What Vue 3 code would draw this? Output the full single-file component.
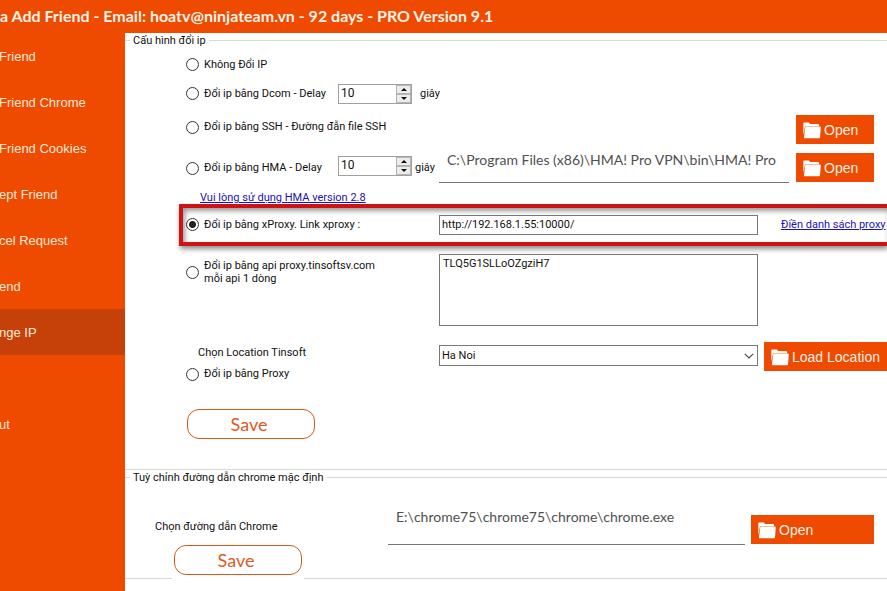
<script setup>
import { ref, h } from 'vue'

const menu = ['Friend', 'Friend Chrome', 'Friend Cookies', 'ept Friend', 'cel Request', 'end', 'nge IP', '', 'ut']
const active = ref(6)
const mode = ref('xproxy')
const dcomDelay = ref(10)
const hmaDelay = ref(10)
const hmaPath = ref('C:\\Program Files (x86)\\HMA! Pro VPN\\bin\\HMA! Pro')
const proxyLink = ref('http://192.168.1.55:10000/')
const apiKeys = ref('TLQ5G1SLLoOZgziH7')
const city = ref('Ha Noi')
const chromePath = ref('E:\\chrome75\\chrome75\\chrome\\chrome.exe')

const FolderIcon = () =>
  h('svg', { viewBox: '0 0 18 17', width: 18, height: 17, 'aria-hidden': 'true' }, [
    h('path', { d: 'M0.3 13V1.4Q0.3 0.6 1.1 0.6H5.6Q6.3 0.6 6.6 1.3L6.9 2H15Q16 2 16 3V4.2H3Q2.1 4.2 1.9 5.1Z', fill: '#fff' }),
    h('path', { d: 'M3.2 4.6H17Q17.9 4.6 17.8 5.5L17 15.4Q16.9 16.2 16.1 16.2H1.6Q0.8 16.2 0.9 15.4L2.2 5.4Q2.4 4.6 3.2 4.6Z', fill: '#fff' }),
  ])
</script>

<template>
  <div class="app">
    <header class="titlebar">a Add Friend - Email: hoatv@ninjateam.vn - 92 days - PRO Version 9.1</header>
    <div class="body">
      <nav class="sidebar">
        <template v-for="(item, i) in menu" :key="i">
          <a v-if="item" href="#" class="item" :class="{ active: active === i }" @click.prevent="active = i">{{ item }}</a>
          <span v-else class="item"></span>
        </template>
      </nav>

      <main class="main">
        <fieldset class="group">
          <legend>Cấu hình đổi ip</legend>
          <div class="ip">
            <div class="row short">
              <label class="radio"><input v-model="mode" type="radio" name="mode" value="none" />Không Đổi IP</label>
            </div>

            <div class="row short">
              <label class="radio delayed"><input v-model="mode" type="radio" name="mode" value="dcom" />Đổi ip bằng Dcom - Delay</label>
              <span class="spinner">
                <input v-model="dcomDelay" type="number" aria-label="Dcom delay" />
                <span class="steps">
                  <button type="button" aria-label="+" @click="dcomDelay++"><i class="up"></i></button>
                  <button type="button" aria-label="-" @click="dcomDelay--"><i class="down"></i></button>
                </span>
              </span>
              <span class="unit wide">giây</span>
            </div>

            <div class="row tool ssh">
              <label class="radio grow"><input v-model="mode" type="radio" name="mode" value="ssh" />Đổi ip bằng SSH - Đường đẫn file SSH</label>
              <button type="button" class="solid"><FolderIcon />Open</button>
            </div>

            <div class="row tool hma">
              <div class="lead">
                <label class="radio delayed"><input v-model="mode" type="radio" name="mode" value="hma" />Đổi ip bằng HMA - Delay</label>
                <span class="spinner">
                  <input v-model="hmaDelay" type="number" aria-label="HMA delay" />
                  <span class="steps">
                    <button type="button" aria-label="+" @click="hmaDelay++"><i class="up"></i></button>
                    <button type="button" aria-label="-" @click="hmaDelay--"><i class="down"></i></button>
                  </span>
                </span>
                <span class="unit">giây</span>
              </div>
              <input v-model="hmaPath" class="path" type="text" aria-label="HMA" />
              <button type="button" class="solid"><FolderIcon />Open</button>
            </div>

            <div class="note"><a href="#">Vui lòng sử dụng HMA version 2.8</a></div>

            <div class="row highlight">
              <label class="radio lead"><input v-model="mode" type="radio" name="mode" value="xproxy" />Đổi ip bằng xProxy. Link xproxy :</label>
              <input v-model="proxyLink" class="box" type="text" aria-label="Link xproxy" />
              <div class="aside"><a href="#">Điền danh sách proxy</a></div>
            </div>

            <div class="row api">
              <label class="radio lead"><input v-model="mode" type="radio" name="mode" value="tinsoft" /><span>Đổi ip bằng api proxy.tinsoftsv.com<br />mỗi api 1 dòng</span></label>
              <textarea v-model="apiKeys" class="box" aria-label="API"></textarea>
              <div class="aside"></div>
            </div>

            <div class="row location">
              <div class="lead stack">
                <label class="caption" for="city">Chọn Location Tinsoft</label>
                <label class="radio"><input v-model="mode" type="radio" name="mode" value="proxy" />Đổi ip bằng Proxy</label>
              </div>
              <div class="select">
                <select id="city" v-model="city"><option>Ha Noi</option></select>
                <svg viewBox="0 0 10 6" width="10" height="6" aria-hidden="true"><path d="M0.8 0.8L5 5L9.2 0.8" fill="none" stroke="#444" stroke-width="1.1" /></svg>
              </div>
              <div class="aside near"><button type="button" class="solid load"><FolderIcon />Load Location</button></div>
            </div>

            <button type="button" class="save">Save</button>
          </div>
        </fieldset>

        <fieldset class="group">
          <legend>Tuỳ chỉnh đường dẫn chrome mặc định</legend>
          <div class="row chrome-row">
            <label class="lead" for="chrome">Chọn đường dẫn Chrome</label>
            <input id="chrome" v-model="chromePath" class="path" type="text" />
            <button type="button" class="solid long"><FolderIcon />Open</button>
          </div>
          <div class="save-wrap"><button type="button" class="save">Save</button></div>
        </fieldset>
      </main>
    </div>
  </div>
</template>

<style>
body {
  background: #fff;
}
</style>

<style scoped>
.app {
  display: flex;
  flex-direction: column;
  min-height: 100vh;
  overflow: hidden;
  color: #111;
  font: 11px/14px Roboto, "Liberation Sans", sans-serif;
}
.app * {
  box-sizing: border-box;
}
input,
textarea,
select,
button {
  margin: 0;
  font: inherit;
  color: inherit;
  border-radius: 0;
  outline: 0;
}
a {
  color: #1a12b4;
}
.titlebar {
  height: 33px;
  background: #ee4a00;
  color: #fff3e6;
  font: 700 16px/32px Lato, sans-serif;
  white-space: nowrap;
}
.body {
  flex: 1;
  display: flex;
}
.sidebar {
  width: 125px;
  flex: none;
  background: #ee4a00;
}
.item {
  display: block;
  height: 46px;
  color: #ffe9d8;
  font: 13px/48px "Liberation Sans", sans-serif;
  text-decoration: none;
  text-indent: -1px;
  white-space: nowrap;
}
.item.active {
  background: #c6410a;
}
.main {
  flex: 1;
  min-width: 0;
}
.group {
  min-width: 0;
  margin: 0;
  padding: 0;
  border: solid #d8dad6;
  border-width: 1px 0;
}
legend {
  margin-left: 5px;
  padding: 0 3px;
  height: 14px;
  line-height: 16px;
}
.row {
  display: flex;
}
.ip {
  padding: 3px 0 30px 61px;
}
.short {
  height: 29px;
  align-items: center;
}
.radio {
  display: flex;
  align-items: center;
  gap: 5px;
  white-space: nowrap;
}
.radio input {
  appearance: none;
  flex: none;
  width: 13px;
  height: 13px;
  border: 1px solid #333;
  border-radius: 50%;
  background: #fff;
}
.radio input:checked {
  background: radial-gradient(circle, #222 3px, #fff 4px);
}
.delayed {
  width: 152px;
}
.lead {
  flex: none;
  width: 253px;
}
.grow {
  flex: 1;
}
.spinner {
  display: flex;
  width: 74px;
  height: 20px;
  border: 1px solid #a0a0a0;
}
.spinner input {
  appearance: textfield;
  flex: 1;
  min-width: 0;
  padding: 0 2px 2px;
  border: 0;
  font-size: 12px;
}
.spinner input::-webkit-inner-spin-button {
  appearance: none;
}
.steps {
  display: flex;
  flex-direction: column;
  width: 15px;
}
.steps button {
  flex: 1;
  display: flex;
  align-items: center;
  justify-content: center;
  padding: 0;
  border: 1px solid #b4b4b4;
  background: #ececec;
}
.steps i {
  border: 3px solid transparent;
}
.steps .up {
  border-top: 0;
  border-bottom-color: #111;
}
.steps .down {
  border-bottom: 0;
  border-top-color: #111;
}
.unit {
  margin-left: 3px;
}
.unit.wide {
  margin-left: 8px;
}
.tool {
  padding-right: 13px;
}
.ssh {
  height: 29px;
  margin-top: 7px;
}
.ssh .radio {
  height: 24px;
}
.hma {
  height: 30px;
  margin-top: 9px;
}
.hma .lead {
  display: flex;
  align-items: center;
}
.hma .spinner {
  margin-bottom: 4px;
}
.path {
  flex: 1;
  min-width: 0;
  padding: 0 8px 16px;
  border: 0;
  border-bottom: 1px solid #777;
  background: none;
  color: #505050;
  font: 14px/14px Lato, sans-serif;
}
.solid {
  flex: none;
  display: flex;
  align-items: center;
  gap: 3px;
  width: 78px;
  height: 29px;
  padding: 0 0 0 7px;
  border: 0;
  background: #ee4a00;
  color: #fff0e4;
  font: 14px/16px "Liberation Sans", sans-serif;
  white-space: nowrap;
}
.solid svg {
  margin-top: 2px;
}
.hma .solid {
  margin-left: 7px;
}
.note {
  margin-top: 8px;
  padding-left: 14px;
  height: 13px;
}
.highlight {
  align-items: center;
  height: 42px;
  margin-left: -7px;
  padding-bottom: 1px;
  border: 4px solid #cc1414;
  border-right: 0;
  padding-left: 3px;
  box-shadow: 1px 3px 5px rgba(0, 0, 0, 0.45), inset 2px 3px 5px rgba(0, 0, 0, 0.4);
}
.box {
  flex: 1;
  min-width: 0;
  height: 20px;
  padding: 0 2px;
  border: 1px solid #777;
  background: #fff;
}
.aside {
  flex: none;
  width: 129px;
  padding-left: 23px;
  white-space: nowrap;
}
.aside.near {
  padding-left: 6px;
}
.api {
  margin-top: 8px;
}
.api .radio {
  height: 36px;
  line-height: 13px;
}
.api .box {
  height: 72px;
  padding: 2px 3px;
  resize: none;
}
.location {
  margin-top: 16px;
}
.stack {
  display: flex;
  flex-direction: column;
  gap: 7px;
  padding-top: 4px;
}
.caption {
  padding-left: 12px;
}
.select {
  flex: 1;
  position: relative;
  padding-top: 3px;
}
.select select {
  appearance: none;
  display: block;
  width: 100%;
  height: 21px;
  padding: 0 2px;
  border: 1px solid #777;
  background: #fff;
}
.select svg {
  position: absolute;
  right: 4px;
  top: 11px;
  pointer-events: none;
}
.load {
  width: 100%;
}
.save {
  display: block;
  width: 128px;
  height: 30px;
  padding: 0 4px 1px 0;
  border: 1px solid #cf5a1c;
  border-radius: 12px;
  background: #fff;
  color: #dc5a1e;
  font: 18px/20px Lato, sans-serif;
}
.ip .save {
  margin: 28px 0 0 1px;
}
.chrome-row {
  align-items: flex-end;
  margin-top: 25px;
  padding: 0 13px 0 30px;
}
.chrome-row .lead {
  width: 233px;
  padding-bottom: 11px;
}
.chrome-row .path {
  height: 36px;
  padding-bottom: 21px;
}
.long {
  width: 123px;
  margin: 0 0 1px 6px;
}
.save-wrap {
  position: relative;
  width: 132px;
  margin: 0 0 -1px 47px;
  padding: 0 2px 4px;
  background: #fff;
}
</style>
